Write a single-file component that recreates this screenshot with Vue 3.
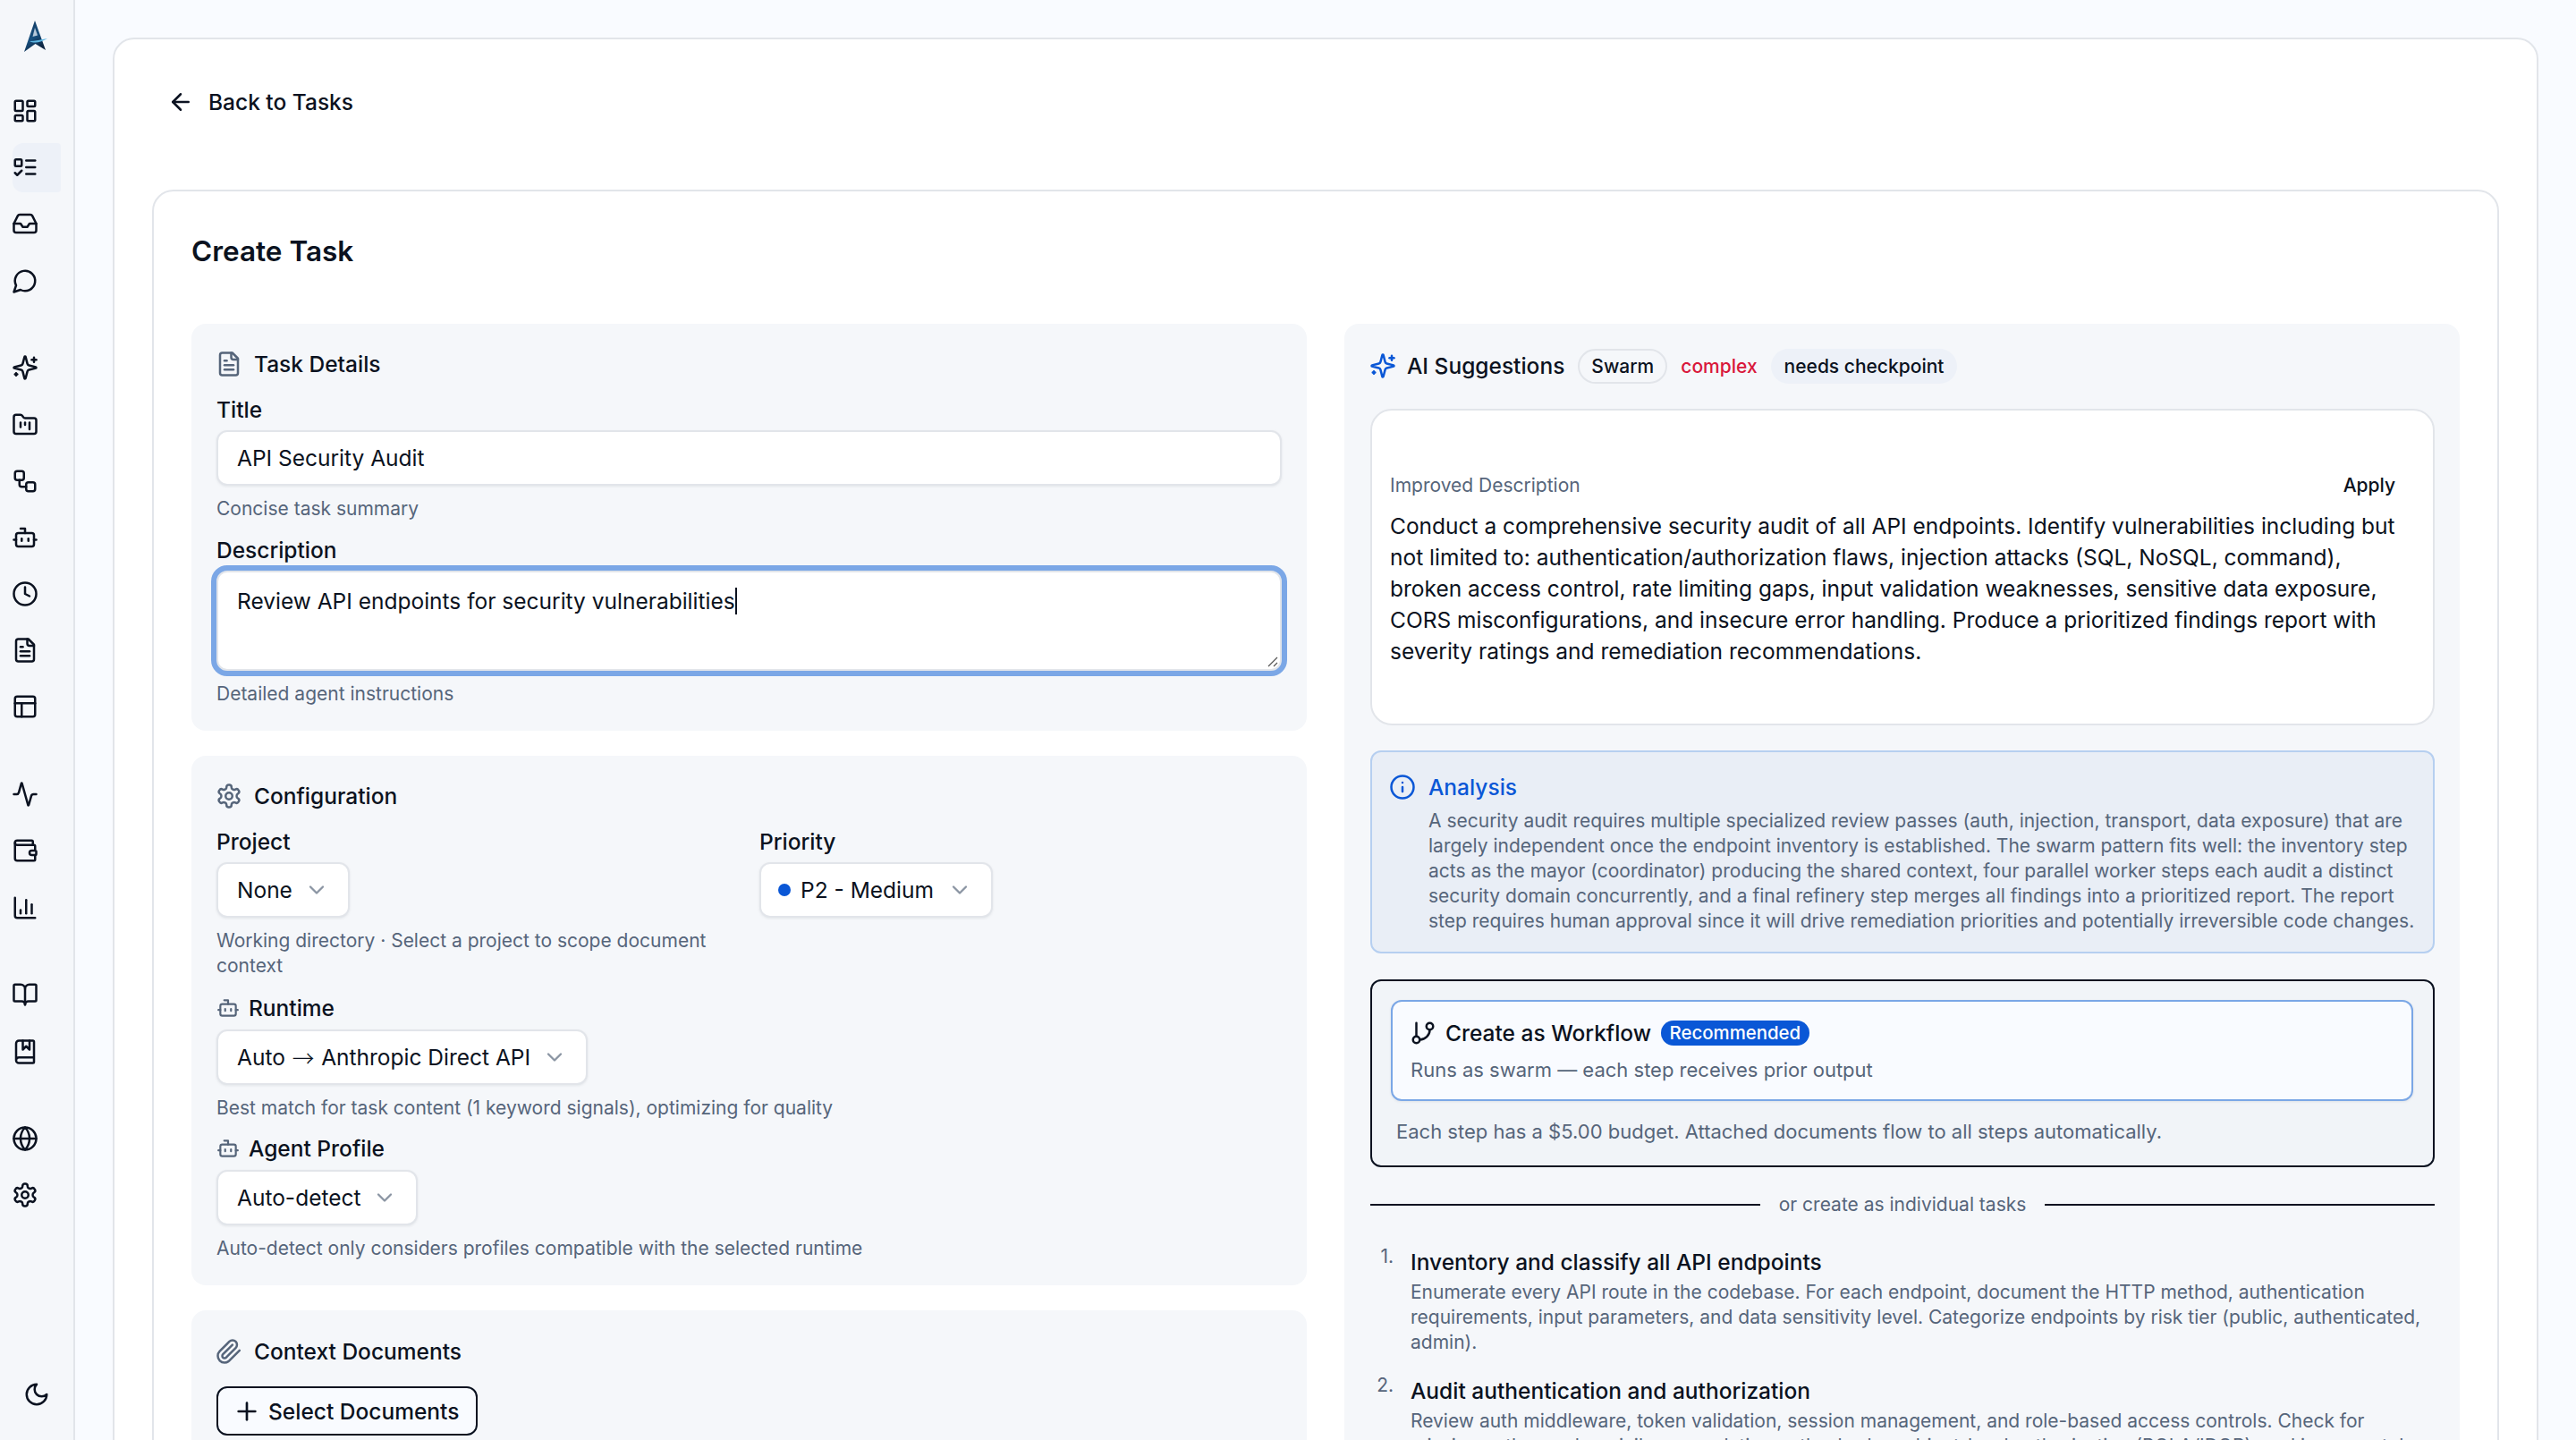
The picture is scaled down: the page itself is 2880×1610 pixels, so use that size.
<script setup>
import { h } from 'vue'

const rect = (x, y, w, h, r) =>
  `M${x + r} ${y}h${w - 2 * r}a${r} ${r} 0 0 1 ${r} ${r}v${h - 2 * r}a${r} ${r} 0 0 1-${r} ${r}h-${w - 2 * r}a${r} ${r} 0 0 1-${r}-${r}v-${h - 2 * r}a${r} ${r} 0 0 1 ${r}-${r}z`
const circle = (cx, cy, r) => `M${cx - r} ${cy}a${r} ${r} 0 1 0 ${2 * r} 0a${r} ${r} 0 1 0-${2 * r} 0z`

const icons = {
  dashboard: [rect(3, 3, 7, 9, 1), rect(14, 3, 7, 5, 1), rect(14, 12, 7, 9, 1), rect(3, 16, 7, 5, 1)],
  todo: [rect(3, 5, 6, 6, 1), 'm3 17 2 2 4-4', 'M13 6h8', 'M13 12h8', 'M13 18h8'],
  inbox: ['M22 12h-6l-2 3h-4l-2-3H2', 'M5.45 5.11 2 12v6a2 2 0 0 0 2 2h16a2 2 0 0 0 2-2v-6l-3.45-6.89A2 2 0 0 0 16.76 4H7.24a2 2 0 0 0-1.79 1.11z'],
  message: ['M7.9 20A9 9 0 1 0 4 16.1L2 22Z'],
  sparkles: ['M9.937 15.5A2 2 0 0 0 8.5 14.063l-6.135-1.582a.5.5 0 0 1 0-.962L8.5 9.936A2 2 0 0 0 9.937 8.5l1.582-6.135a.5.5 0 0 1 .963 0L14.063 8.5A2 2 0 0 0 15.5 9.937l6.135 1.581a.5.5 0 0 1 0 .964L15.5 14.063a2 2 0 0 0-1.437 1.437l-1.582 6.135a.5.5 0 0 1-.963 0z', 'M20 3v4', 'M22 5h-4', 'M4 17v2', 'M5 18H3'],
  kanban: ['M4 20h16a2 2 0 0 0 2-2V8a2 2 0 0 0-2-2h-7.93a2 2 0 0 1-1.66-.9l-.82-1.2A2 2 0 0 0 7.93 3H4a2 2 0 0 0-2 2v13c0 1.1.9 2 2 2Z', 'M8 10v4', 'M12 10v2', 'M16 10v6'],
  workflow: [rect(3, 3, 8, 8, 2), 'M7 11v4a2 2 0 0 0 2 2h4', rect(13, 13, 8, 8, 2)],
  bot: ['M12 8V4H8', rect(4, 8, 16, 12, 2), 'M2 14h2', 'M20 14h2', 'M15 13v2', 'M9 13v2'],
  clock: [circle(12, 12, 10), 'M12 6v6l4 2'],
  file: ['M15 2H6a2 2 0 0 0-2 2v16a2 2 0 0 0 2 2h12a2 2 0 0 0 2-2V7Z', 'M14 2v4a2 2 0 0 0 2 2h4', 'M10 9H8', 'M16 13H8', 'M16 17H8'],
  panels: [rect(3, 3, 18, 18, 2), 'M3 9h18', 'M9 21V9'],
  activity: ['M22 12h-2.48a2 2 0 0 0-1.93 1.46l-2.35 8.36a.25.25 0 0 1-.48 0L9.24 2.18a.25.25 0 0 0-.48 0l-2.35 8.36A2 2 0 0 1 4.49 12H2'],
  wallet: ['M19 7V4a1 1 0 0 0-1-1H5a2 2 0 0 0 0 4h15a1 1 0 0 1 1 1v4h-3a2 2 0 0 0 0 4h3a1 1 0 0 0 1-1v-2a1 1 0 0 0-1-1', 'M3 5v14a2 2 0 0 0 2 2h15a1 1 0 0 0 1-1v-4'],
  chart: ['M3 3v16a2 2 0 0 0 2 2h16', 'M18 17V9', 'M13 17V5', 'M8 17v-3'],
  book: ['M12 7v14', 'M3 18a1 1 0 0 1-1-1V4a1 1 0 0 1 1-1h5a4 4 0 0 1 4 4 4 4 0 0 1 4-4h5a1 1 0 0 1 1 1v13a1 1 0 0 1-1 1h-6a3 3 0 0 0-3 3 3 3 0 0 0-3-3z'],
  bookmarked: ['M10 2v8l3-3 3 3V2', 'M4 19.5v-15A2.5 2.5 0 0 1 6.5 2H19a1 1 0 0 1 1 1v18a1 1 0 0 1-1 1H6.5a1 1 0 0 1 0-5H20'],
  globe: [circle(12, 12, 10), 'M12 2a14.5 14.5 0 0 0 0 20 14.5 14.5 0 0 0 0-20', 'M2 12h20'],
  settings: ['M12.22 2h-.44a2 2 0 0 0-2 2v.18a2 2 0 0 1-1 1.73l-.43.25a2 2 0 0 1-2 0l-.15-.08a2 2 0 0 0-2.73.73l-.22.38a2 2 0 0 0 .73 2.73l.15.1a2 2 0 0 1 1 1.72v.51a2 2 0 0 1-1 1.74l-.15.09a2 2 0 0 0-.73 2.73l.22.38a2 2 0 0 0 2.73.73l.15-.08a2 2 0 0 1 2 0l.43.25a2 2 0 0 1 1 1.73V20a2 2 0 0 0 2 2h.44a2 2 0 0 0 2-2v-.18a2 2 0 0 1 1-1.73l.43-.25a2 2 0 0 1 2 0l.15.08a2 2 0 0 0 2.73-.73l.22-.39a2 2 0 0 0-.73-2.73l-.15-.08a2 2 0 0 1-1-1.74v-.5a2 2 0 0 1 1-1.74l.15-.09a2 2 0 0 0 .73-2.73l-.22-.38a2 2 0 0 0-2.73-.73l-.15.08a2 2 0 0 1-2 0l-.43-.25a2 2 0 0 1-1-1.73V4a2 2 0 0 0-2-2z', circle(12, 12, 3)],
  moon: ['M12 3a6 6 0 0 0 9 9 9 9 0 1 1-9-9Z'],
  back: ['m12 19-7-7 7-7', 'M19 12H5'],
  clip: ['m21.44 11.05-9.19 9.19a6 6 0 0 1-8.49-8.49l8.57-8.57A4 4 0 1 1 18 8.84l-8.59 8.57a2 2 0 0 1-2.83-2.83l8.49-8.48'],
  plus: ['M5 12h14', 'M12 5v14'],
  chevron: ['m6 9 6 6 6-6'],
  info: [circle(12, 12, 10), 'M12 16v-4', 'M12 8h.01'],
  branch: ['M6 3v12', circle(18, 6, 3), circle(6, 18, 3), 'M18 9a9 9 0 0 1-9 9']
}

const Icon = (props) =>
  h('svg', {
    width: props.size || 30,
    height: props.size || 30,
    viewBox: '0 0 24 24',
    fill: 'none',
    stroke: 'currentColor',
    'stroke-width': 2,
    'stroke-linecap': 'round',
    'stroke-linejoin': 'round'
  }, icons[props.name].map(d => h('path', { d })))
Icon.props = ['name', 'size']

const navGroups = [
  ['dashboard', 'todo', 'inbox', 'message'],
  ['sparkles', 'kanban', 'workflow', 'bot', 'clock', 'file', 'panels'],
  ['activity', 'wallet', 'chart'],
  ['book', 'bookmarked'],
  ['globe', 'settings']
]

const tasks = [
  {
    title: 'Inventory and classify all API endpoints',
    text: 'Enumerate every API route in the codebase. For each endpoint, document the HTTP method, authentication requirements, input parameters, and data sensitivity level. Categorize endpoints by risk tier (public, authenticated, admin).'
  },
  {
    title: 'Audit authentication and authorization',
    text: 'Review auth middleware, token validation, session management, and role-based access controls. Check for missing auth guards, privilege escalation paths, broken object-level authorization (BOLA/IDOR), and insecure token handling.'
  }
]
</script>

<template>
  <div class="app">
    <aside class="sidebar">
      <svg class="logo" width="28" height="38" viewBox="0 0 28 38">
        <defs>
          <linearGradient id="logoFill" x1="0" y1="0" x2="0.5" y2="1">
            <stop offset="0" stop-color="#14365c" />
            <stop offset="0.6" stop-color="#17507f" />
            <stop offset="1" stop-color="#0d2440" />
          </linearGradient>
        </defs>
        <path d="M13 1 1 36 13.5 27 25 34Z" fill="url(#logoFill)" />
        <path d="M13 9 10.5 19 16 17.5Z" fill="#dfe8f2" opacity="0.8" />
        <path d="M7 24C13 24 20 22 27 21 21 24.5 13 27.5 7 24Z" fill="#5db6e2" />
      </svg>
      <nav class="nav">
        <div v-for="(group, i) in navGroups" :key="i" class="nav-group">
          <div
            v-for="name in group"
            :key="name"
            :class="['nav-item', { active: name === 'todo' }]"
          >
            <Icon :name="name" />
          </div>
        </div>
      </nav>
      <div class="theme-toggle"><Icon name="moon" /></div>
    </aside>

    <main class="main">
      <div class="page-card">
        <div class="back"><Icon name="back" /><span>Back to Tasks</span></div>

        <div class="form-card">
          <h1 class="form-title">Create Task</h1>

          <div class="columns">
            <div class="column">
              <section class="section details">
                <h2 class="section-title"><Icon class="muted" name="file" />Task Details</h2>
                <div class="field">
                  <div class="label">Title</div>
                  <div class="input">API Security Audit</div>
                  <div class="hint">Concise task summary</div>
                </div>
                <div class="field snug">
                  <div class="label">Description</div>
                  <div class="textarea">
                    <span>Review API endpoints for security vulnerabilities</span><i class="caret"></i>
                    <svg class="grip" width="14" height="14" viewBox="0 0 14 14">
                      <path d="M13 3 3 13M13 9l-4 4" stroke="#555" stroke-width="1.2" fill="none" />
                    </svg>
                  </div>
                  <div class="hint">Detailed agent instructions</div>
                </div>
              </section>

              <section class="section config">
                <h2 class="section-title"><Icon class="muted" name="settings" />Configuration</h2>
                <div class="two-col">
                  <div class="field">
                    <div class="label">Project</div>
                    <div class="select">None<Icon class="chev" name="chevron" :size="28" /></div>
                    <div class="hint">Working directory · Select a project to scope document context</div>
                  </div>
                  <div class="field">
                    <div class="label">Priority</div>
                    <div class="select priority"><i class="dot"></i>P2 - Medium<Icon class="chev" name="chevron" :size="28" /></div>
                  </div>
                </div>
                <div class="field tight">
                  <div class="label with-icon"><Icon class="muted" name="bot" :size="26" />Runtime</div>
                  <div class="select">Auto <span class="arrow">→</span> Anthropic Direct API<Icon class="chev" name="chevron" :size="28" /></div>
                  <div class="hint">Best match for task content (1 keyword signals), optimizing for quality</div>
                </div>
                <div class="field snug">
                  <div class="label with-icon"><Icon class="muted" name="bot" :size="26" />Agent Profile</div>
                  <div class="select">Auto-detect<Icon class="chev" name="chevron" :size="28" /></div>
                  <div class="hint">Auto-detect only considers profiles compatible with the selected runtime</div>
                </div>
              </section>

              <section class="section docs">
                <h2 class="section-title"><Icon class="muted" name="clip" />Context Documents</h2>
                <div class="select-docs"><Icon name="plus" :size="32" />Select Documents</div>
              </section>
            </div>

            <section class="section suggestions">
              <div class="ai-head">
                <Icon class="blue" name="sparkles" />
                <span class="ai-title">AI Suggestions</span>
                <span class="pill outline">Swarm</span>
                <span class="pill plain">complex</span>
                <span class="pill tint">needs checkpoint</span>
              </div>

              <div class="improved">
                <div class="improved-head">
                  <span>Improved Description</span>
                  <span class="apply">Apply</span>
                </div>
                <p>Conduct a comprehensive security audit of all API endpoints. Identify vulnerabilities including but not limited to: authentication/authorization flaws, injection attacks (SQL, NoSQL, command), broken access control, rate limiting gaps, input validation weaknesses, sensitive data exposure, CORS misconfigurations, and insecure error handling. Produce a prioritized findings report with severity ratings and remediation recommendations.</p>
              </div>

              <div class="analysis">
                <div class="analysis-head"><Icon name="info" />Analysis</div>
                <p>A security audit requires multiple specialized review passes (auth, injection, transport, data exposure) that are largely independent once the endpoint inventory is established. The swarm pattern fits well: the inventory step acts as the mayor (coordinator) producing the shared context, four parallel worker steps each audit a distinct security domain concurrently, and a final refinery step merges all findings into a prioritized report. The report step requires human approval since it will drive remediation priorities and potentially irreversible code changes.</p>
              </div>

              <div class="workflow">
                <div class="workflow-option">
                  <div class="workflow-title">
                    <Icon name="branch" />
                    <span>Create as Workflow</span>
                    <span class="badge">Recommended</span>
                  </div>
                  <div class="workflow-sub">Runs as swarm — each step receives prior output</div>
                </div>
                <div class="workflow-note">Each step has a $5.00 budget. Attached documents flow to all steps automatically.</div>
              </div>

              <div class="divider"><span>or create as individual tasks</span></div>

              <ol class="task-list">
                <li v-for="(task, i) in tasks" :key="task.title">
                  <span class="num">{{ i + 1 }}.</span>
                  <div>
                    <div class="task-title">{{ task.title }}</div>
                    <div class="task-text">{{ task.text }}</div>
                  </div>
                </li>
              </ol>
            </section>
          </div>
        </div>
      </div>
    </main>
  </div>
</template>

<style>
html, body {
  margin: 0;
  height: 100%;
  overflow: hidden;
}
</style>

<style scoped>
.app {
  display: flex;
  width: 2880px;
  height: 1610px;
  overflow: hidden;
  background: #f9fbff;
  color: #0b1220;
  font-family: Inter, "Liberation Sans", sans-serif;
  font-size: 24.5px;
}

.sidebar {
  flex: none;
  position: relative;
  display: flex;
  flex-direction: column;
  width: 84px;
  box-sizing: border-box;
  border-right: 2px solid #e2e5ea;
  background: #f5f7fa;
  color: #0b1220;
}

.logo {
  margin: 22px 0 0 26px;
}

.nav {
  display: flex;
  flex-direction: column;
  gap: 42.75px;
  margin-top: 36.5px;
}

.nav-group {
  display: flex;
  flex-direction: column;
  gap: 8.2px;
}

.nav-item {
  display: flex;
  align-items: center;
  width: 54px;
  height: 55px;
  margin-left: 14px;
  border-radius: 12px 4px 4px 12px;
}

.nav-item svg {
  margin-left: -1px;
}

.nav-item.active {
  background: #edf1f8;
}

.theme-toggle {
  position: absolute;
  left: 26px;
  top: 1544px;
  height: 30px;
}

.main {
  flex: 1;
  min-width: 0;
  padding: 42px 42px 0;
}

.page-card {
  height: 1700px;
  box-sizing: border-box;
  padding: 42px;
  border: 2px solid #e2e5ea;
  border-radius: 24px;
  background: #fff;
}

.back {
  display: flex;
  align-items: center;
  gap: 16px;
  height: 56px;
  margin: 0 0 70px 17px;
  font-weight: 500;
}

.form-card {
  padding: 39px 42px 42px;
  border: 2px solid #e2e5ea;
  border-radius: 24px;
  background: #fff;
}

.form-title {
  margin: 0 0 53px;
  font-size: 31.5px;
  line-height: 56px;
  font-weight: 600;
}

.columns {
  display: grid;
  grid-template-columns: 1fr 1fr;
  gap: 42px;
  align-items: start;
}

.column {
  display: flex;
  flex-direction: column;
  gap: 28px;
}

.section {
  padding: 25px 28px 27px;
  border-radius: 16px;
  background: #f5f7fa;
}

.section-title {
  display: flex;
  align-items: center;
  gap: 13px;
  margin: 0;
  font-size: 24.5px;
  line-height: 40px;
  font-weight: 500;
}

.section-title svg {
  margin-left: -1px;
}

.muted {
  flex: none;
  color: #56657a;
}

.blue {
  flex: none;
  color: #0a57d6;
}

.field {
  margin-top: 12px;
}

.field.tight {
  margin-top: 15px;
}

.field.snug {
  margin-top: 13px;
}

.label {
  height: 36px;
  font-size: 24.5px;
  line-height: 38px;
  font-weight: 500;
}

.label.with-icon {
  display: flex;
  align-items: center;
  gap: 10px;
}

.input,
.textarea {
  box-sizing: border-box;
  width: 1191px;
  margin-top: 6px;
  padding: 0 21px;
  border: 2px solid #e2e5ea;
  border-radius: 12px;
  background: #fff;
  box-shadow: 0 1px 3px rgba(15, 23, 42, 0.08);
}

.input {
  height: 62px;
  line-height: 59px;
}

.textarea {
  position: relative;
  height: 112px;
  padding-top: 14px;
  line-height: 36px;
  outline: 6px solid #7ba7e6;
}

.caret {
  display: inline-block;
  width: 2px;
  height: 30px;
  margin-bottom: -6px;
  background: #0b1220;
}

.grip {
  position: absolute;
  right: 2px;
  bottom: 2px;
}

.hint {
  margin-top: 12px;
  color: #56657a;
  font-size: 21px;
  line-height: 28px;
}

.two-col {
  display: grid;
  grid-template-columns: 1fr 1fr;
  gap: 23px;
}

.select {
  display: inline-flex;
  align-items: center;
  box-sizing: border-box;
  height: 62px;
  margin-top: 6px;
  padding: 0 21px;
  border: 2px solid #e2e5ea;
  border-radius: 12px;
  background: #fff;
  box-shadow: 0 1px 3px rgba(15, 23, 42, 0.08);
  vertical-align: top;
  white-space: pre;
}

.arrow {
  margin: 0 1px;
  font-family: "Noto Sans CJK SC", "Liberation Sans", sans-serif;
  font-weight: 300;
}

.dot {
  width: 14px;
  height: 14px;
  margin: 0 11px 0 -2px;
  border-radius: 50%;
  background: #0a57d6;
}

.chev {
  flex: none;
  margin-left: 13px;
  color: #8b95a3;
}

.priority .chev {
  margin-left: 15px;
}

.docs {
  padding-top: 26px;
  height: 300px;
}

.select-docs {
  display: inline-flex;
  align-items: center;
  gap: 8px;
  box-sizing: border-box;
  height: 55px;
  margin-top: 19px;
  padding: 0 19px 0 16px;
  border: 2px solid #0b1220;
  border-radius: 12px;
  background: #f9fbff;
  font-weight: 500;
}

.suggestions {
  padding: 27px 28px 40px 29px;
}

.ai-head {
  display: flex;
  align-items: center;
  height: 40px;
}

.ai-head svg {
  margin-left: -1px;
}

.ai-title {
  margin: 0 15px 0 12px;
  font-weight: 500;
}

.pill {
  box-sizing: border-box;
  height: 39px;
  padding: 0 15px;
  border-radius: 20px;
  font-size: 21px;
  line-height: 39px;
  font-weight: 500;
}

.pill.outline {
  padding: 0 13px;
  border: 2px solid #e2e5ea;
  line-height: 35px;
}

.pill.plain {
  color: #d9183b;
}

.pill.tint {
  background: #edf1f8;
}

.improved {
  margin-top: 28px;
  padding: 61px 20px 63px;
  border: 2px solid #e2e5ea;
  border-radius: 24px;
  background: #fff;
}

.improved-head {
  display: flex;
  align-items: center;
  justify-content: space-between;
  height: 44px;
  padding-right: 22px;
  color: #56657a;
  font-size: 21px;
}

.apply {
  color: #0b1220;
  font-weight: 500;
}

.improved p {
  margin: 7px 0 0;
  line-height: 35px;
}

.analysis {
  margin-top: 28px;
  padding: 19px 20px 20px 19px;
  border: 2px solid #b6cff0;
  border-radius: 12px;
  background: #e9eef6;
}

.analysis-head {
  display: flex;
  align-items: center;
  gap: 14px;
  color: #0a57d6;
  line-height: 40px;
  font-weight: 500;
}

.analysis p {
  margin: 4px 0 0 44px;
  color: #56657a;
  font-size: 21px;
  line-height: 28px;
}

.workflow {
  margin-top: 29px;
  padding: 21px 22px 22px 21px;
  border: 2px solid #0b1220;
  border-radius: 12px;
  background: #f1f4f8;
}

.workflow-option {
  padding: 15px 20px 17px;
  border: 2px solid #7ba7e6;
  border-radius: 12px;
  background: #f9fbff;
  box-shadow: 0 1px 3px rgba(15, 23, 42, 0.08);
}

.workflow-title {
  display: flex;
  align-items: center;
  gap: 10px;
  height: 40px;
  font-weight: 500;
}

.workflow-title svg {
  margin-left: -1px;
}

.badge {
  margin-left: 1px;
  padding: 0 9.5px;
  border-radius: 14px;
  background: #0a57d6;
  color: #fff;
  font-size: 20.4px;
  line-height: 28px;
}

.workflow-sub {
  margin-top: 5px;
  color: #56657a;
  font-size: 22px;
  line-height: 32px;
}

.workflow-note {
  margin: 18px 0 0 6px;
  color: #56657a;
  font-size: 22px;
  line-height: 32px;
}

.divider {
  display: flex;
  align-items: center;
  gap: 21px;
  margin-top: 26px;
  color: #56657a;
  font-size: 21px;
  line-height: 32px;
}

.divider::before,
.divider::after {
  content: "";
  flex: 1;
  height: 2px;
  background: #0b1220;
}

.task-list {
  display: flex;
  flex-direction: column;
  gap: 20px;
  margin: 28px 0 0;
  padding: 0;
  list-style: none;
}

.task-list li {
  display: flex;
}

.num {
  flex: none;
  width: 26px;
  margin-right: 19px;
  color: #56657a;
  font-size: 21px;
  line-height: 28px;
  text-align: right;
}

.task-title {
  line-height: 40px;
  font-weight: 500;
}

.task-text {
  color: #56657a;
  font-size: 21px;
  line-height: 28px;
}
</style>
